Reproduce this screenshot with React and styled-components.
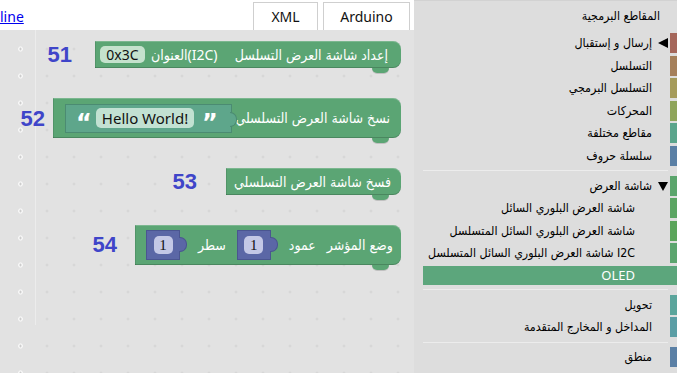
import React from "react";
import styled, { createGlobalStyle } from "styled-components";

const GlobalStyle = createGlobalStyle`
  html, body { margin: 0; padding: 0; width: 677px; height: 373px; overflow: hidden; background: #fff; }
  body { font-family: "DejaVu Sans Condensed", "DejaVu Sans", "Noto Sans", sans-serif; }
`;

const Page = styled.div`
  display: grid;
  grid-template-columns: 414px 263px;
  height: 373px;
`;

const Main = styled.div`
  display: flex;
  flex-direction: column;
  min-width: 0;
`;

const TopBar = styled.div`
  height: 30px;
  flex: none;
  display: flex;
  align-items: flex-end;
  background: #fff;
  padding-right: 4px;
  box-sizing: border-box;
`;

const Link = styled.a`
  color: #0000ee;
  text-decoration: underline;
  font: 14px "Noto Sans", "Liberation Sans", sans-serif;
  align-self: center;
  margin-right: auto;
  margin-top: 2px;
`;

const Tab = styled.div`
  width: ${(p) => p.w}px;
  height: 28px;
  box-sizing: border-box;
  border: 1px solid #cfcfcf;
  border-bottom: none;
  display: flex;
  align-items: center;
  justify-content: center;
  font: 14px "Noto Sans", "Liberation Sans", sans-serif;
  color: #111;
  margin-left: ${(p) => p.ml || 0}px;
  background: #fff;
`;

/* Blockly workspace: dot grid, a column of ring dots on the left and a thin guide line */
const Workspace = styled.div`
  flex: 1;
  display: flex;
  flex-direction: column;
  align-items: flex-end;
  gap: 30px;
  padding: 11px 13px 0 0;
  background-color: #e2e2e2;
  background-image:
    linear-gradient(#ececec, #ececec),
    radial-gradient(circle at center, #c6c6c6 0 0.9px, #fbfbfb 1.3px 2px, transparent 2.6px),
    radial-gradient(circle at center, #cecece 0 0.8px, transparent 1.3px);
  background-size: 1px 295px, 27px 27px, 27px 27px;
  background-repeat: no-repeat, repeat-y, repeat;
  background-position: 35px 0, 6.5px 5.5px, 6.5px 5.5px;
`;

const Row = styled.div`
  display: flex;
  align-items: center;
`;

const Num = styled.div`
  font: bold 22px "Liberation Sans", Arial, sans-serif;
  color: #3f45c9;
  margin-right: ${(p) => p.mr}px;
  margin-top: ${(p) => p.mt || 0}px;
`;

const Block = styled.div`
  position: relative;
  width: ${(p) => p.w}px;
  height: ${(p) => p.h}px;
  box-sizing: border-box;
  background: #5ba574;
  border-radius: 0 8px 8px 0;
  display: flex;
  align-items: center;
  gap: ${(p) => p.gap || 0}px;
  padding: 0 ${(p) => p.pr}px 0 ${(p) => p.pl}px;
  color: #fff;
  font-size: 14px;
  flex: none;
  box-shadow: inset 0 -1px 0 rgba(0, 0, 0, 0.18), inset 1px 0 0 rgba(0, 0, 0, 0.1),
    inset 0 1px 0 rgba(255, 255, 255, 0.2);
  &::after {
    content: "";
    position: absolute;
    right: 12px;
    bottom: -5px;
    width: 17px;
    height: 5px;
    background: #5ba574;
    border-radius: 0 0 7px 7px;
    box-shadow: 0 1px 0 rgba(0, 0, 0, 0.15);
  }
`;

const Text = styled.span`
  white-space: nowrap;
  margin-left: ${(p) => (p.auto ? "auto" : `${p.ml || 0}px`)};
  line-height: 1;
`;

const Latin = styled.span`
  white-space: nowrap;
  font-family: "Noto Sans", "Liberation Sans", sans-serif;
  font-size: 14px;
  line-height: 1;
`;

const Field = styled.span`
  display: inline-flex;
  align-items: center;
  justify-content: center;
  height: ${(p) => p.h || 17}px;
  width: ${(p) => p.w}px;
  border-radius: 5px;
  background: ${(p) => p.bg};
  color: #111;
  font: ${(p) => p.font || '14px "Noto Sans", "Liberation Sans", sans-serif'};
  flex: none;
`;

const StringBlock = styled.div`
  position: relative;
  width: 167px;
  height: 29px;
  box-sizing: border-box;
  background: #5ea68b;
  border: 1px solid #4b8b72;
  display: flex;
  align-items: center;
  padding-left: 10px;
  gap: 8px;
  flex: none;
  &::after {
    content: "";
    position: absolute;
    right: -6px;
    top: 7px;
    width: 6px;
    height: 13px;
    background: #5ea68b;
    border: 1px solid #4b8b72;
    border-left: none;
    border-radius: 0 7px 7px 0;
  }
`;

const Quote = styled.span`
  font: bold 24px "DejaVu Sans", sans-serif;
  color: #fff;
  line-height: 1;
  margin-top: 9px;
  width: 12px;
  text-align: center;
`;

const NumBlock = styled.div`
  position: relative;
  width: 34px;
  height: 30px;
  box-sizing: border-box;
  background: #5b67a6;
  border: 1px solid #4a5590;
  display: flex;
  align-items: center;
  justify-content: center;
  margin-right: 7px;
  flex: none;
  &::after {
    content: "";
    position: absolute;
    right: -8px;
    top: 6px;
    width: 7px;
    height: 13px;
    background: #5b67a6;
    border: 1px solid #4a5590;
    border-left: none;
    border-radius: 0 7px 7px 0;
  }
`;

const Toolbox = styled.div`
  background: #dddddd;
  border-top: 1px solid #d2d2d2;
  padding-left: 9px;
  display: flex;
  flex-direction: column;
  font-size: 12.3px;
  color: #000;
  box-sizing: border-box;
`;

const Heading = styled.div`
  height: 27.5px;
  display: flex;
  align-items: center;
  justify-content: flex-end;
  padding-right: 17px;
  padding-top: 2px;
  box-sizing: border-box;
`;

const Group = styled.div`
  padding: 4.5px 0;
  display: flex;
  flex-direction: column;
  gap: 2.5px;
`;

const Separator = styled.div`
  height: 1px;
  background: #ececec;
  margin-right: 9px;
`;

const Item = styled.div`
  height: ${(p) => (p.selected ? 19 : 20)}px;
  display: flex;
  align-items: center;
  justify-content: flex-end;
  background: ${(p) => (p.selected ? p.color : "transparent")};
  color: ${(p) => (p.selected ? "#fff" : "#000")};
`;

const ItemLabel = styled.span`
  white-space: nowrap;
  padding-right: ${(p) => (p.level ? 17 : 0)}px;
  font-family: ${(p) => (p.latin ? '"Noto Sans", "Liberation Sans", sans-serif' : "inherit")};
  font-size: ${(p) => (p.latin ? "13px" : "inherit")};
`;

const ArrowSlot = styled.span`
  width: 18px;
  height: 100%;
  display: flex;
  align-items: center;
  flex: none;
`;

const ArrowLeft = styled.span`
  margin-left: 6px;
  width: 0;
  height: 0;
  border-top: 5px solid transparent;
  border-bottom: 5px solid transparent;
  border-right: 10px solid #000;
`;

const ArrowDown = styled.span`
  margin-left: 6px;
  margin-top: 1px;
  width: 0;
  height: 0;
  border-left: 5.5px solid transparent;
  border-right: 5.5px solid transparent;
  border-top: 9px solid #000;
`;

const Swatch = styled.span`
  width: 7px;
  height: 100%;
  flex: none;
  background: ${(p) => p.color};
`;

const groups = [
  [
    { label: "إرسال و إستقبال", color: "#a5675b", arrow: "left" },
    { label: "التسلسل", color: "#a5805b" },
    { label: "التسلسل البرمجي", color: "#a59b5b" },
    { label: "المحركات", color: "#8fa55b" },
    { label: "مقاطع مختلفة", color: "#5ba58c" },
    { label: "سلسلة حروف", color: "#5b80a5" },
  ],
  [
    { label: "شاشة العرض", color: "#5ba56c", arrow: "down" },
    { label: "شاشة العرض البلوري السائل", color: "#5ba563", level: 1 },
    { label: "شاشة العرض البلوري السائل المتسلسل", color: "#5ba55b", level: 1 },
    { label: "شاشة العرض البلوري السائل المتسلسل I2C", color: "#5ba56e", level: 1 },
    { label: "OLED", color: "#5ca67c", level: 1, selected: true, latin: true },
  ],
  [
    { label: "تحويل", color: "#5ba59c" },
    { label: "المداخل و المخارج المتقدمة", color: "#5b9ea5" },
  ],
  [{ label: "منطق", color: "#5b80a5" }],
];

export default function App() {
  return (
    <>
      <GlobalStyle />
      <Page>
        <Main>
          <TopBar>
            <Link href="#">line</Link>
            <Tab w={65}>XML</Tab>
            <Tab w={87} ml={5}>Arduino</Tab>
          </TopBar>
          <Workspace>
            <Row>
              <Num mr={23}>51</Num>
              <Block w={306} h={27} pl={5} pr={13}>
                <Field w={45} bg="#c5e2cd">0x3C</Field>
                <Text ml={6}>العنوان</Text>
                <Latin>(I2C)</Latin>
                <Text auto>إعداد شاشة العرض التسلسل</Text>
              </Block>
            </Row>
            <Row>
              <Num mr={8} mt={1}>52</Num>
              <Block w={348} h={40} pl={12} pr={11}>
                <StringBlock>
                  <Quote>“</Quote>
                  <Field w={98} h={20} bg="#c2e1d2" font='15px "Noto Sans", "Liberation Sans", sans-serif'>
                    Hello World!
                  </Field>
                  <Quote>”</Quote>
                </StringBlock>
                <Text auto>نسخ شاشة العرض التسلسلي</Text>
              </Block>
            </Row>
            <Row>
              <Num mr={29}>53</Num>
              <Block w={175} h={27} pl={8} pr={11}>
                <Text auto>فسخ شاشة العرض التسلسلي</Text>
              </Block>
            </Row>
            <Row>
              <Num mr={18}>54</Num>
              <Block w={266} h={40} pl={11} pr={13} gap={11}>
                <NumBlock>
                  <Field w={19} h={18} bg="#c4c8e6" font='15px "Liberation Serif", serif'>1</Field>
                </NumBlock>
                <Text>سطر</Text>
                <NumBlock>
                  <Field w={19} h={18} bg="#c4c8e6" font='15px "Liberation Serif", serif'>1</Field>
                </NumBlock>
                <Text>عمود</Text>
                <Text auto>وضع المؤشر</Text>
              </Block>
            </Row>
          </Workspace>
        </Main>
        <Toolbox>
          <Heading>المقاطع البرمجية</Heading>
          {groups.map((g, gi) => (
            <React.Fragment key={gi}>
              {gi > 0 && <Separator />}
              <Group>
                {g.map((it) => (
                  <Item key={it.label} selected={it.selected} color={it.color}>
                    <ItemLabel level={it.level} latin={it.latin}>{it.label}</ItemLabel>
                    <ArrowSlot>
                      {it.arrow === "left" && <ArrowLeft />}
                      {it.arrow === "down" && <ArrowDown />}
                    </ArrowSlot>
                    <Swatch color={it.color} />
                  </Item>
                ))}
              </Group>
            </React.Fragment>
          ))}
        </Toolbox>
      </Page>
    </>
  );
}
